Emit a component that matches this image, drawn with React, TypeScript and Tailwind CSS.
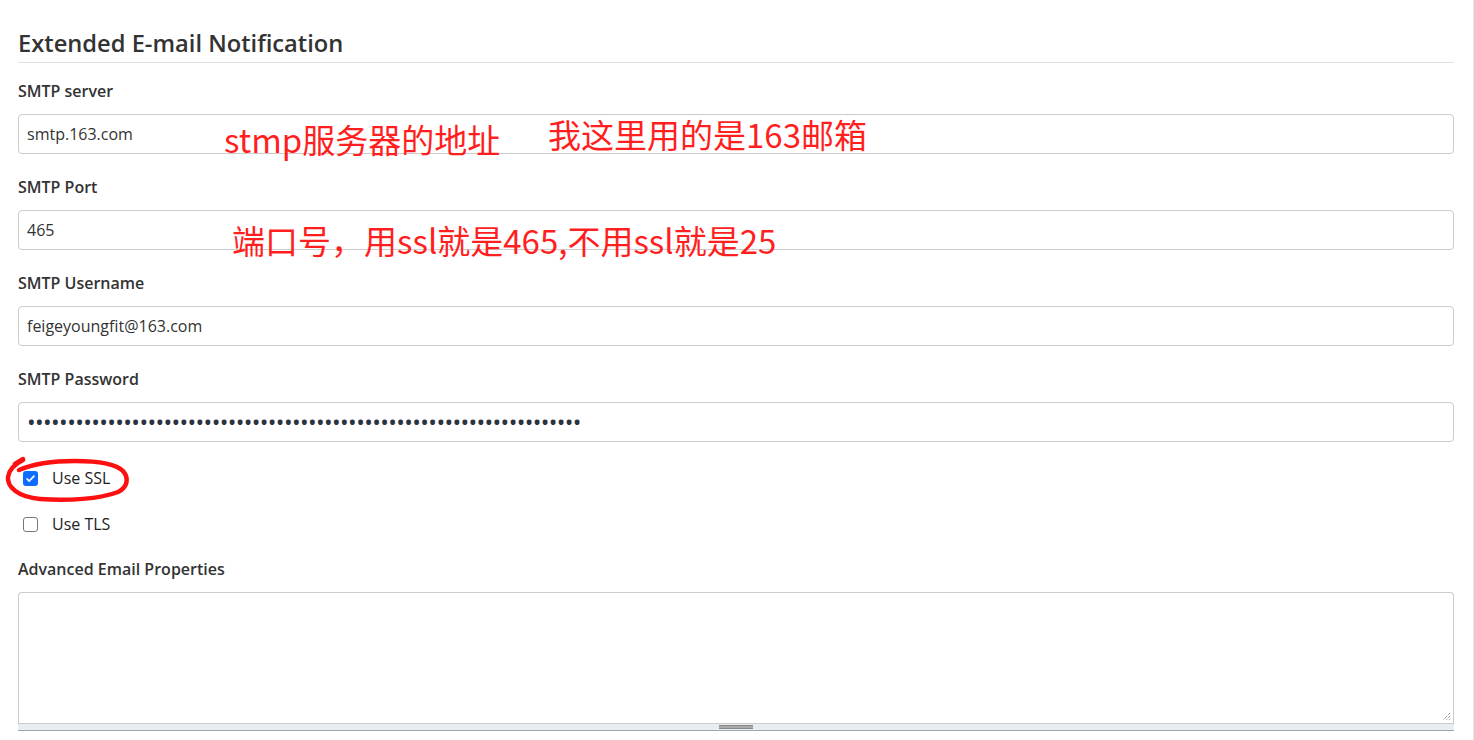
import React from "react";

const font = { fontFamily: '"Open Sans", "Noto Sans", sans-serif' };
const cjk = { fontFamily: '"Noto Sans CJK SC", "Noto Sans", sans-serif' };

function Field({ label, value, mt = "mt-[21px]" }: { label: string; value: string; mt?: string }) {
  return (
    <div className={mt}>
      <div className="text-[16px] font-semibold leading-[24px] text-[#333]">{label}</div>
      <div className="mt-[11px] flex h-[40px] items-center rounded-[4px] border border-[#ccc] bg-white px-[8px] text-[16px] text-[#333]">
        {value}
      </div>
    </div>
  );
}

function Check({ label, checked }: { label: string; checked?: boolean }) {
  return (
    <div className="flex h-[24px] items-center pl-[5px]">
      {checked ? (
        <span className="flex h-[15px] w-[15px] items-center justify-center rounded-[3px] bg-[#0d6efd]">
          <svg viewBox="0 0 16 16" className="h-[11px] w-[11px]" fill="none">
            <path d="M3 8.5l3.2 3.2L13 4.5" stroke="#fff" strokeWidth="2.4" strokeLinecap="round" strokeLinejoin="round" />
          </svg>
        </span>
      ) : (
        <span className="h-[15px] w-[15px] rounded-[3px] border border-[#777] bg-white" />
      )}
      <span className="ml-[14px] text-[16px] text-[#222]">{label}</span>
    </div>
  );
}

export default function App() {
  return (
    <div className="relative min-h-[740px] w-full overflow-hidden border-r border-[#e6e6e6] bg-white" style={font}>
      <div className="w-[1436px] pl-[18px] pt-[29px] box-content">
        <h2 className="border-b border-[#e0e0e0] pb-[4px] text-[23.7px] font-semibold leading-[29px] text-[#333]">
          Extended E-mail Notification
        </h2>
        <Field label="SMTP server" value="smtp.163.com" mt="mt-[16px]" />
        <Field label="SMTP Port" value="465" />
        <Field label="SMTP Username" value="feigeyoungfit@163.com" />
        <div className="mt-[21px]">
          <div className="text-[16px] font-semibold leading-[24px] text-[#333]">SMTP Password</div>
          <div className="mt-[11px] flex h-[40px] items-center overflow-hidden rounded-[4px] border border-[#ccc] bg-white px-[8px] text-[23px] leading-none tracking-[-0.62px] text-[#2a3340]">
            {"•".repeat(69)}
          </div>
        </div>
        <div className="mt-[24px]">
          <Check label="Use SSL" checked />
        </div>
        <div className="mt-[22px]">
          <Check label="Use TLS" />
        </div>
        <div className="mt-[21px] text-[16px] font-semibold leading-[24px] text-[#333]">Advanced Email Properties</div>
        <div className="mt-[11px]">
          <div className="relative h-[131px] rounded-t-[4px] border border-b-0 border-[#ccc] bg-white">
            <svg className="absolute bottom-[2px] right-[2px]" width="10" height="10" viewBox="0 0 10 10">
              <path d="M9 2L2 9M9 5L5 9M9 8L8 9" stroke="#777" strokeWidth="1" strokeDasharray="1 1" />
            </svg>
          </div>
          <div className="flex h-[8px] justify-center border-t border-b border-t-[#ccc] border-b-[#9aa7b0] bg-[#e8edf0]">
            <div className="mt-[1px] h-[4px] w-[34px] border-y border-[#888] bg-[#aaa]" />
          </div>
        </div>
      </div>

      <div className="absolute left-[224px] top-[117px] text-[33px] leading-[44px] text-[#ff1f1f]" style={cjk}>
        stmp服务器的地址
      </div>
      <div className="absolute left-[548px] top-[112px] text-[33px] leading-[44px] text-[#ff1f1f]" style={cjk}>
        我这里用的是163邮箱
      </div>
      <div className="absolute left-[232px] top-[218px] text-[33px] leading-[44px] text-[#ff1f1f]" style={cjk}>
        端口号，用ssl就是465,不用ssl就是25
      </div>
      <svg className="absolute left-0 top-[450px]" width="140" height="60" viewBox="0 0 140 60">
        <path
          d="M23 10 C15 14 9 19 8 27 C7 37 18 47 40 49 C68 51 100 49 118 42 C128 37 129 28 123 21 C115 13 95 11 75 11 C55 11 35 13 19 20"
          fill="none"
          stroke="#ff1010"
          strokeWidth="4.5"
          strokeLinecap="round"
        />
        <path d="M23 9 L15 14" stroke="#ff1010" strokeWidth="4.5" strokeLinecap="round" />
      </svg>
    </div>
  );
}
